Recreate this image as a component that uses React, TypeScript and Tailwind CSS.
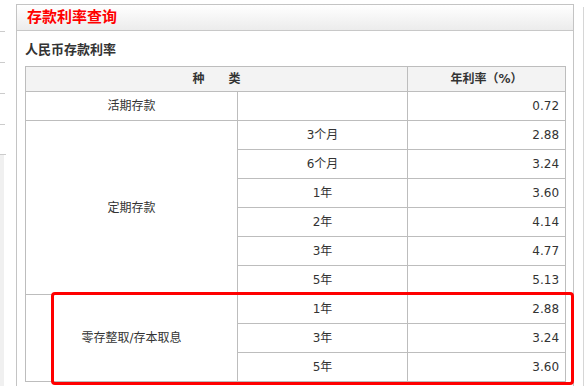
import React from "react";

const font = { fontFamily: '"DejaVu Sans", "Noto Sans CJK SC", sans-serif' };

const fixed = [
  ["3个月", "2.88"],
  ["6个月", "3.24"],
  ["1年", "3.60"],
  ["2年", "4.14"],
  ["3年", "4.77"],
  ["5年", "5.13"],
];

const lingcun = [
  ["1年", "2.88"],
  ["3年", "3.24"],
  ["5年", "3.60"],
];

function Section({ name, rows }: { name: string; rows: string[][] }) {
  return (
    <>
      {rows.map(([term, rate], i) => (
        <tr key={term} className="h-[29px]">
          {i === 0 && (
            <td rowSpan={rows.length} className="border border-[#bdbdbd] text-center">
              {name}
            </td>
          )}
          <td className="border border-[#bdbdbd] text-center">{term}</td>
          <td className="border border-[#bdbdbd] text-right pr-[6px]">{rate}</td>
        </tr>
      ))}
    </>
  );
}

export default function App() {
  return (
    <div className="relative flex w-[587px] h-[386px] overflow-hidden bg-white text-[#333]" style={font}>
      <div className="w-4 shrink-0 flex flex-col">
        <div className="h-[32px] border-b border-[#ccc] w-[5px]" />
        <div className="h-[31px] border-b border-[#ccc] w-[5px]" />
        <div className="h-[31px] border-b border-[#ccc] w-[5px]" />
        <div className="h-[31px] border-b border-[#ccc] w-[5px]" />
        <div className="h-[30px] border-b border-[#ccc] w-[6px]" />
        <div className="flex-1 w-[4px] bg-[#f0f0f0]" />
      </div>

      <div className="mt-[4px] w-[558px] shrink-0 border border-[#c4c4c4] border-b-0 bg-white">
        <div className="h-[26px] border-b border-[#c8c8c8] bg-gradient-to-b from-white to-[#ececec] pl-[10px] flex items-center">
          <span className="text-[15px] leading-none font-bold text-[#ff0000]">存款利率查询</span>
        </div>
        <div className="px-[8px]">
          <div className="h-[35px] pt-[11px] text-[13px] font-bold leading-[16px] text-[#333]">
            人民币存款利率
          </div>
          <table className="w-[540px] border-collapse text-[12px] leading-none text-[#333] table-fixed">
            <colgroup>
              <col className="w-[212px]" />
              <col className="w-[170px]" />
              <col className="w-[158px]" />
            </colgroup>
            <tbody>
              <tr className="h-[25px] bg-[#f3f3f3] font-bold">
                <td colSpan={2} className="border border-[#bdbdbd] text-center">
                  种　　类
                </td>
                <td className="border border-[#bdbdbd] text-center">年利率（%）</td>
              </tr>
              <tr className="h-[29px]">
                <td className="border border-[#bdbdbd] text-center">活期存款</td>
                <td className="border border-[#bdbdbd]" />
                <td className="border border-[#bdbdbd] text-right pr-[6px]">0.72</td>
              </tr>
              <Section name="定期存款" rows={fixed} />
              <Section name="零存整取/存本取息" rows={lingcun} />
            </tbody>
          </table>
        </div>
      </div>

      <div className="flex-1 flex">
        <div className="ml-[9px] mt-[7px] w-px bg-[#d6d6d6]" />
      </div>

      <div className="absolute left-[51px] top-[292px] w-[523px] h-[93px] border-[3px] border-[#ff0000] rounded-[4px]" />
    </div>
  );
}
